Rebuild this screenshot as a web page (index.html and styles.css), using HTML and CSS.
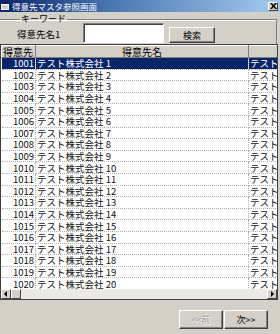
FILE: index.html
```html
<!DOCTYPE html>
<html lang="ja">
<head>
    <meta charset="UTF-8">
    <title>得意先マスタ参照画面</title>
    <link rel="stylesheet" href="styles.css">
</head>
<body>
    <div class="window">
        <div class="titlebar">
            <svg class="app-icon" width="8" height="8" viewBox="0 0 8 8">
                <rect x="0" y="0" width="8" height="8" fill="#ffffff"/>
                <rect x="0" y="0" width="8" height="2" fill="#0a246a"/>
                <rect x="1" y="3" width="6" height="4" fill="#d4d0c8"/>
            </svg>
            <span class="title">得意先マスタ参照画面</span>
            <button class="close-btn">
                <svg width="7" height="6" viewBox="0 0 7 6">
                    <path d="M0 0h2l1.5 2L5 0h2L4.5 3 7 6H5L3.5 4 2 6H0l2.5-3z" fill="#000"/>
                </svg>
            </button>
        </div>

        <fieldset class="keyword">
            <legend>キーワード</legend>
            <label for="name1">得意先名1</label>
            <input type="text" id="name1">
            <button class="btn search-btn">検索</button>
        </fieldset>

        <div class="grid">
            <div class="grid-view">
                <table>
                    <colgroup>
                        <col class="c-code">
                        <col class="c-name">
                        <col class="c-extra">
                    </colgroup>
                    <thead>
                        <tr>
                            <th class="left">得意先</th>
                            <th>得意先名</th>
                            <th></th>
                        </tr>
                    </thead>
                    <tbody id="rows">
                    </tbody>
                </table>
            </div>
            <div class="hscroll">
                <span class="sb-btn">
                    <svg width="4" height="6" viewBox="0 0 4 6"><path d="M3 0v6L0 3z" fill="#000"/></svg>
                </span>
                <span class="sb-thumb"></span>
                <span class="sb-track"></span>
                <span class="sb-btn">
                    <svg width="4" height="6" viewBox="0 0 4 6"><path d="M1 0v6l3-3z" fill="#000"/></svg>
                </span>
            </div>
        </div>

        <div class="nav">
            <button class="btn" disabled>&lt;&lt;前</button>
            <button class="btn">次&gt;&gt;</button>
        </div>
    </div>

    <script>
        const rows = document.getElementById("rows");
        for (let i = 1; i <= 20; i++) {
            const tr = document.createElement("tr");
            if (i === 1) tr.className = "selected";
            tr.innerHTML = `
                <td class="code">${1000 + i}</td>
                <td>テスト株式会社 ${i}</td>
                <td>テスト${i}</td>
            `;
            rows.appendChild(tr);
        }
    </script>
</body>
</html>
```

FILE: styles.css
```css
body {
    margin: 0;
    background-color: #d4d0c8;
    font-family: "Noto Sans CJK JP", "DejaVu Sans", sans-serif;
    font-size: 10px;
    color: #000;
}
.window {
    width: 280px;
    height: 334px;
    display: flex;
    flex-direction: column;
    overflow: hidden;
}
.titlebar {
    height: 12px;
    display: flex;
    align-items: center;
    padding: 0 2px 0 1px;
    background: linear-gradient(to right, #0a246a 0%, #4a78b0 40%, #a6caf0 100%);
    color: #ffffff;
}
.app-icon {
    margin-right: 3px;
}
.title {
    font-size: 8.5px;
    line-height: 12px;
    flex: 1;
}
.close-btn {
    width: 10px;
    height: 9px;
    padding: 0;
    border: 1px solid;
    border-color: #ffffff #404040 #404040 #ffffff;
    background-color: #d4d0c8;
    display: flex;
    align-items: center;
    justify-content: center;
}
.keyword {
    margin: 1px 3px 0 0;
    padding: 0 0 2px 17px;
    height: 31px;
    box-sizing: border-box;
    border: 1px solid #808080;
    border-bottom: none;
    border-left: none;
    box-shadow: inset 0 1px 0 #ffffff;
    display: flex;
    align-items: flex-end;
    min-width: 0;
}
.keyword legend {
    font-size: 9px;
    line-height: 12px;
    padding: 0 1px;
    margin-left: 3px;
}
.keyword label {
    font-size: 9.5px;
    width: 66px;
    align-self: flex-start;
    line-height: 12px;
    margin-top: 3px;
}
.keyword input {
    width: 81px;
    height: 20px;
    box-sizing: border-box;
    margin: 0;
    border: 1px solid;
    border-color: #808080 #ffffff #ffffff #808080;
    box-shadow: inset 1px 1px 0 #404040;
    background: #ffffff;
    align-self: flex-start;
    margin-top: -2px;
}
.btn {
    font-family: inherit;
    font-size: 9px;
    background-color: #d4d0c8;
    border: 1px solid;
    border-color: #ffffff #404040 #404040 #ffffff;
    box-shadow: inset -1px -1px 0 #808080;
    padding: 0;
    color: #000;
}
.btn:disabled {
    color: #a0a0a0;
    text-shadow: 1px 1px 0 #ffffff;
}
.search-btn {
    width: 46px;
    height: 16px;
    margin-left: 5px;
}
.grid {
    width: 278px;
    height: 256px;
    box-sizing: border-box;
    border: 1px solid #404040;
    background-color: #ffffff;
    display: flex;
    flex-direction: column;
}
.grid-view {
    flex: 1;
    overflow: hidden;
}
table {
    width: 300px;
    border-collapse: collapse;
    table-layout: fixed;
}
.c-code {
    width: 34px;
}
.c-name {
    width: 213px;
}
.c-extra {
    width: 53px;
}
th {
    height: 12px;
    padding: 0;
    font-weight: normal;
    font-size: 10px;
    line-height: 11px;
    background-color: #d4d0c8;
    border-top: 1px solid #ffffff;
    border-left: 1px solid #ffffff;
    border-right: 1px solid #808080;
    border-bottom: 1px solid #808080;
    box-sizing: border-box;
}
th.left {
    text-align: left;
    padding-left: 1px;
}
td {
    height: 11.6px;
    padding: 0 1px;
    font-size: 9.5px;
    line-height: 10px;
    color: #111;
    white-space: nowrap;
    overflow: hidden;
    border-right: 1px dotted #b0b0b0;
    border-bottom: 1px dotted #b0b0b0;
    box-sizing: border-box;
}
td.code {
    text-align: right;
}
tr.selected td {
    background-color: #0a246a;
    color: #ffffff;
}
.hscroll {
    height: 10px;
    display: flex;
    background-color: #ebe9e4;
}
.sb-btn, .sb-thumb {
    width: 8px;
    height: 8px;
    display: flex;
    align-items: center;
    justify-content: center;
    background-color: #d4d0c8;
    border: 1px solid;
    border-color: #ffffff #404040 #404040 #ffffff;
}
.sb-track {
    flex: 1;
}
.nav {
    display: flex;
    justify-content: flex-end;
    padding: 10px 12px 0 0;
}
.nav .btn {
    width: 44px;
    height: 19px;
    margin-left: 1px;
}
```
